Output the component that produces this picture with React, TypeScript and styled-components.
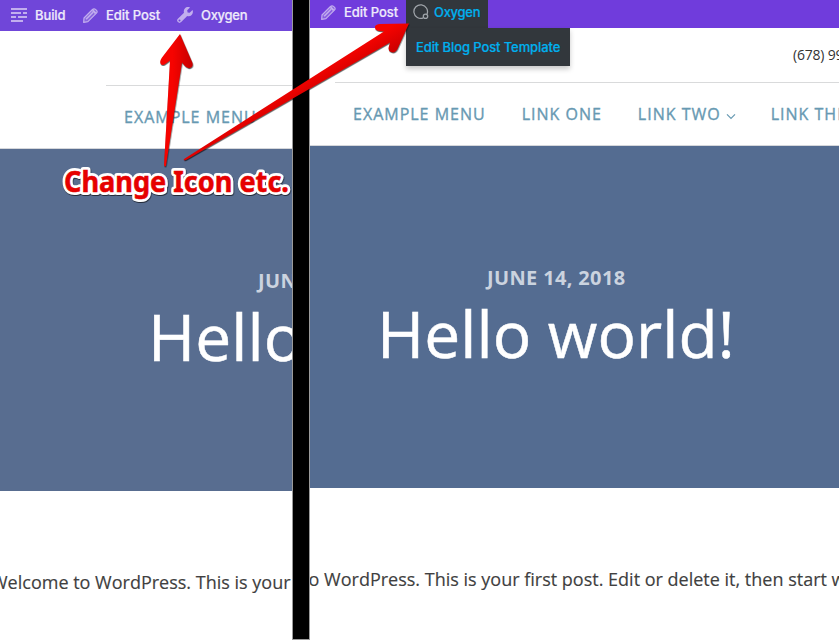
import React from "react";
import styled, { createGlobalStyle } from "styled-components";

const GlobalStyle = createGlobalStyle`
  *, *::before, *::after { box-sizing: border-box; }
  html, body { margin: 0; overflow: hidden; background: #fff; }
`;

const Comparison = styled.main`
  position: relative;
  display: flex;
  width: 839px;
  height: 640px;
  overflow: hidden;
  background: #fff;
  font-family: "Open Sans", sans-serif;
`;

const Pane = styled.section<{ $width: number }>`
  width: ${(p) => p.$width}px;
  flex: none;
  height: 640px;
  overflow: hidden;
`;

const Divider = styled.div`
  flex: none;
  width: 18px;
  height: 640px;
  background: #000;
  border: 1px solid #9b9b9b;
  border-top: 0;
`;

const AdminBar = styled.nav<{ $height: number; $color: string; $pad: number }>`
  display: flex;
  height: ${(p) => p.$height}px;
  padding-left: ${(p) => p.$pad}px;
  background: ${(p) => p.$color};
`;

const AdminItem = styled.div<{ $width: number; $gap: number; $active?: boolean; $pad?: number; $lift?: number }>`
  position: relative;
  display: flex;
  align-items: center;
  flex: none;
  width: ${(p) => p.$width}px;
  gap: ${(p) => p.$gap}px;
  padding-left: ${(p) => p.$pad ?? 0}px;
  padding-bottom: ${(p) => p.$lift ?? 0}px;
  color: ${(p) => (p.$active ? "#00b0ee" : "#eee9fb")};
  background: ${(p) => (p.$active ? "#32373c" : "transparent")};
  font: 500 13px/18px Inter, sans-serif;
  white-space: nowrap;
  -webkit-text-stroke: 0.2px currentColor;
  svg { flex: none; display: block; }
`;

const AdminLabel = styled.span<{ $spacing: number }>`
  letter-spacing: ${(p) => p.$spacing}px;
`;

const Submenu = styled.div`
  position: absolute;
  z-index: 2;
  top: 28px;
  left: 0;
  width: 164px;
  height: 38px;
  padding: 10px 0 0 10px;
  color: #00b0ee;
  background: #32373c;
  box-shadow: 0 3px 5px rgba(0, 0, 0, 0.22);
  letter-spacing: -0.1px;
`;

const Page = styled.div<{ $shift: number }>`
  width: 760px;
  margin-left: ${(p) => p.$shift}px;
`;

const ContactRow = styled.div`
  height: 54px;
  padding: 17px 0 0 564px;
  color: #333;
  font-size: 14px;
  line-height: 20px;
  letter-spacing: -0.2px;
`;

const MenuRow = styled.nav`
  display: flex;
  align-items: flex-start;
  height: 63px;
  margin-left: 106px;
  padding: 19px 0 0 18px;
  gap: 36px;
  border-top: 1px solid #d9dadb;
  color: #6799b2;
  font-size: 16px;
  line-height: 24px;
  letter-spacing: 1px;
  -webkit-text-stroke: 0.35px currentColor;
  white-space: nowrap;
`;

const MenuLink = styled.span`
  display: flex;
  align-items: center;
  flex: none;
  gap: 5px;
  svg { margin: 4px -1px 0 0; }
`;

const Hero = styled.header<{ $color: string }>`
  height: 343px;
  padding-top: 117px;
  border-top: 1px solid #d5d7db;
  background: ${(p) => p.$color};
`;

const PostDate = styled.div`
  height: 29px;
  padding-left: 258px;
  color: #cbd3df;
  font-size: 20px;
  font-weight: 700;
  line-height: 29px;
  letter-spacing: 0.35px;
  white-space: nowrap;
`;

const PostTitle = styled.h1`
  margin: 0;
  padding: 0 0 0 148px;
  color: #fff;
  font-size: 64px;
  font-weight: 400;
  line-height: 84px;
  letter-spacing: 0.05px;
  -webkit-text-stroke: 0.5px currentColor;
  white-space: nowrap;
`;

const PostBody = styled.p`
  margin: 76px 0 0 -9px;
  color: #404040;
  font-size: 18px;
  line-height: 30px;
  -webkit-text-stroke: 0.15px currentColor;
  white-space: nowrap;
`;

const Annotation = styled.svg`
  position: absolute;
  z-index: 5;
  inset: 0;
  pointer-events: none;
`;

const CalloutText = styled.text`
  font-family: "Noto Sans", sans-serif;
  font-size: 28px;
  font-weight: 700;
`;

const BuildIcon = () => (
  <svg width="16" height="14" viewBox="0 0 16 14" fill="#c2aeee">
    <path d="M0 0h16v2H0zM0 4h10v2H0zM12 4h4v2h-4zM0 8h5v2H0zM7 8h9v2H7zM0 12h12v2H0z" />
  </svg>
);

const PencilIcon = () => (
  <svg width="15" height="15" viewBox="0 0 15 15" fill="none" stroke="#c2aeee" strokeLinejoin="round">
    <path d="m1 10 8.5-8.500Q11 .1 12.500 1.400l1 1q1.300 1.300-.1 2.700L4.900 13.600.7 14.300z" fill="#c2aeee" fillOpacity="0.3" strokeWidth="1.200" />
    <path d="m3.100 11.200 6.900-6.900" strokeWidth="1.600" />
    <path d="m9.600 2.300 3.100 3.100" strokeWidth="2" />
  </svg>
);

const WrenchIcon = () => (
  <svg width="16" height="16" viewBox="0 0 16 16">
    <path
      d="M15.5 3.1 12.7 5.8 10.6 5.5 10.2 3.3 13 .6C11.2-.3 9.2.1 7.9 1.5 6.8 2.7 6.5 4.2 7 5.8L.9 11.8a2.3 2.3 0 1 0 3.3 3.3l6-6.1c1.6.5 3.2.2 4.4-1 1.3-1.3 1.7-3.3.9-4.9M2.5 12.5a1 1 0 1 1 0 2 1 1 0 0 1 0-2"
      fill="#c2aeee"
      fillRule="evenodd"
    />
  </svg>
);

const OxygenIcon = () => (
  <svg width="16" height="16" viewBox="0 0 16 16" fill="none" stroke="#a0a5aa" strokeWidth="1.25">
    <path d="M10.3 13.9A6.8 6.8 0 1 1 14 10.2" />
    <circle cx="12.5" cy="12.2" r="2.2" />
  </svg>
);

const Chevron = () => (
  <svg width="10" height="7" viewBox="0 0 10 7" fill="none" stroke="#6799b2" strokeWidth="1.2">
    <path d="m1 1.3 4 4 4-4" />
  </svg>
);

const BlogPage = ({ shift, heroColor }: { shift: number; heroColor: string }) => (
  <Page $shift={shift}>
    <ContactRow>(678) 999</ContactRow>
    <MenuRow>
      <MenuLink>EXAMPLE MENU</MenuLink>
      <MenuLink>LINK ONE</MenuLink>
      <MenuLink>LINK TWO <Chevron /></MenuLink>
      <MenuLink>LINK THREE</MenuLink>
    </MenuRow>
    <Hero $color={heroColor}>
      <PostDate>JUNE 14, 2018</PostDate>
      <PostTitle>Hello world!</PostTitle>
    </Hero>
    <PostBody>Welcome to WordPress. This is your first post. Edit or delete it, then start writing!</PostBody>
  </Page>
);

const CALLOUT = "Change Icon etc.";

export default function App() {
  return (
    <>
      <GlobalStyle />
      <Comparison>
        <Pane $width={292}>
          <AdminBar $height={31} $color="#7046d9" $pad={11}>
            <AdminItem $width={72} $gap={8} $lift={1}><BuildIcon /><AdminLabel $spacing={-0.1}>Build</AdminLabel></AdminItem>
            <AdminItem $width={94} $gap={8} $lift={1}><PencilIcon /><AdminLabel $spacing={-0.05}>Edit Post</AdminLabel></AdminItem>
            <AdminItem $width={80} $gap={8} $lift={1}><WrenchIcon /><AdminLabel $spacing={-0.3}>Oxygen</AdminLabel></AdminItem>
          </AdminBar>
          <BlogPage shift={0} heroColor="#586d90" />
        </Pane>
        <Divider />
        <Pane $width={529}>
          <AdminBar $height={28} $color="#703cdc" $pad={11}>
            <AdminItem $width={85} $gap={8} $lift={4}><PencilIcon /><AdminLabel $spacing={-0.05}>Edit Post</AdminLabel></AdminItem>
            <AdminItem $width={82} $gap={5} $pad={7} $lift={4} $active>
              <OxygenIcon /><AdminLabel $spacing={-0.3}>Oxygen</AdminLabel>
              <Submenu>Edit Blog Post Template</Submenu>
            </AdminItem>
          </AdminBar>
          <BlogPage shift={-81} heroColor="#546c91" />
        </Pane>
        <Annotation width="839" height="640" viewBox="0 0 839 640">
          <defs>
            <linearGradient id="upArrow" x1="165" x2="190" y1="0" y2="0" gradientUnits="userSpaceOnUse">
              <stop offset="0.3" stopColor="#f60300" />
              <stop offset="1" stopColor="#cd0000" />
            </linearGradient>
            <linearGradient id="sideArrow" x1="350" x2="361" y1="50" y2="69" gradientUnits="userSpaceOnUse">
              <stop offset="0" stopColor="#f60300" />
              <stop offset="1" stopColor="#cf0000" />
            </linearGradient>
            <filter id="soft" x="-20%" y="-20%" width="140%" height="140%" colorInterpolationFilters="sRGB">
              <feDropShadow dx="0.5" dy="1" stdDeviation="0.7" floodColor="#000" floodOpacity="0.6" />
            </filter>
          </defs>
          <g filter="url(#soft)">
            <path d="M180 34 192.5 63Q193.500 67 190 68 187 69 184 65L182 62.500 166 165.500Q165 168 164 165L170 60.500 166 63.500Q162 66.500 160.500 63.500 159.500 61 162 57.500Z" fill="url(#upArrow)" />
            <path d="M409 23.500 397.500 49Q395 53.500 391 52 387.500 50.500 389 46L390 42.500 186 160Q183 161 184 159L384 31.500 379 31Q374.500 30 375 26.500 376 24 380 24Z" fill="url(#sideArrow)" />
          </g>
          <g filter="url(#soft)">
            <CalloutText x="64" y="192" textLength="225" lengthAdjust="spacingAndGlyphs" fill="#fff" stroke="#fff" strokeWidth="6" strokeLinejoin="round">{CALLOUT}</CalloutText>
          </g>
          <CalloutText x="64" y="192" textLength="225" lengthAdjust="spacingAndGlyphs" fill="#e60000" stroke="#e60000" strokeWidth="0.5">{CALLOUT}</CalloutText>
        </Annotation>
      </Comparison>
    </>
  );
}
